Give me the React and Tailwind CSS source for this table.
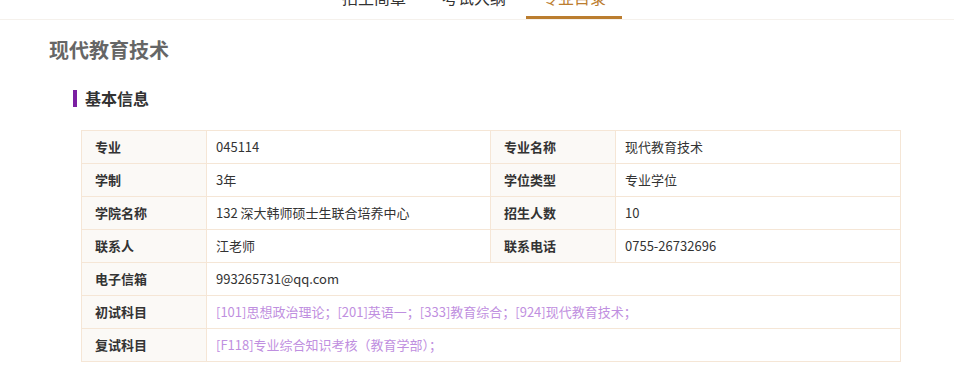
export default function App() {
  const rows = [
    [['专业', '045114'], ['专业名称', '现代教育技术']],
    [['学制', '3年'], ['学位类型', '专业学位']],
    [['学院名称', '132 深大韩师硕士生联合培养中心'], ['招生人数', '10']],
    [['联系人', '江老师'], ['联系电话', '0755-26732696']],
  ];
  const wide = [
    { label: '电子信箱', value: '993265731@qq.com' },
    { label: '初试科目', value: '[101]思想政治理论；[201]英语一；[333]教育综合；[924]现代教育技术；', purple: true },
    { label: '复试科目', value: '[F118]专业综合知识考核（教育学部）；', purple: true },
  ];
  const labelCls = 'h-[33px] border border-[#f5e6d6] bg-[#fbf9f6] pl-[13px] font-bold text-[#333] align-middle';
  const valueCls = 'h-[33px] border border-[#f5e6d6] pl-[9px] align-middle';

  return (
    <div className="w-[954px] h-[391px] overflow-hidden bg-white font-['Microsoft_YaHei','Noto_Sans_CJK_SC',sans-serif]">
      {/* tabs, scrolled mostly out of view */}
      <div className="-mt-[22px] border-b border-[#f5f1ec]">
        <div className="flex justify-center gap-1 pr-[6px]">
          {['招生简章', '考试大纲', '专业目录'].map((t, i) => (
            <div
              key={t}
              className={
                'w-24 h-[41px] flex items-center justify-center text-base border-b-[3px] ' +
                (i === 2 ? 'border-[#bb7d2f] text-[#bb7d2f]' : 'border-transparent text-[#333]')
              }
            >
              {t}
            </div>
          ))}
        </div>
      </div>

      <div className="pl-[49px] pt-[17px]">
        <h1 className="text-[20px] leading-[26px] font-bold text-[#666]">现代教育技术</h1>
      </div>

      <div className="pl-[73px] mt-[24px] flex items-center gap-[8px]">
        <span className="w-[4px] h-[17px] bg-[#7b1fa2]" />
        <h2 className="text-base leading-[22px] font-bold text-[#333]">基本信息</h2>
      </div>

      <div className="pl-[81px] mt-[21px]">
        <table className="w-[820px] border-collapse table-fixed text-[13px] text-[#333]">
          <colgroup>
            <col className="w-[125px]" />
            <col className="w-[284px]" />
            <col className="w-[125px]" />
            <col />
          </colgroup>
          <tbody>
            {rows.map((r, i) => (
              <tr key={i}>
                <td className={labelCls}>{r[0][0]}</td>
                <td className={valueCls}>{r[0][1]}</td>
                <td className={labelCls}>{r[1][0]}</td>
                <td className={valueCls}>{r[1][1]}</td>
              </tr>
            ))}
            {wide.map((w) => (
              <tr key={w.label}>
                <td className={labelCls}>{w.label}</td>
                <td colSpan={3} className={valueCls + (w.purple ? ' text-[#bf8fe0]' : '')}>
                  {w.value}
                </td>
              </tr>
            ))}
          </tbody>
        </table>
      </div>
    </div>
  );
}
